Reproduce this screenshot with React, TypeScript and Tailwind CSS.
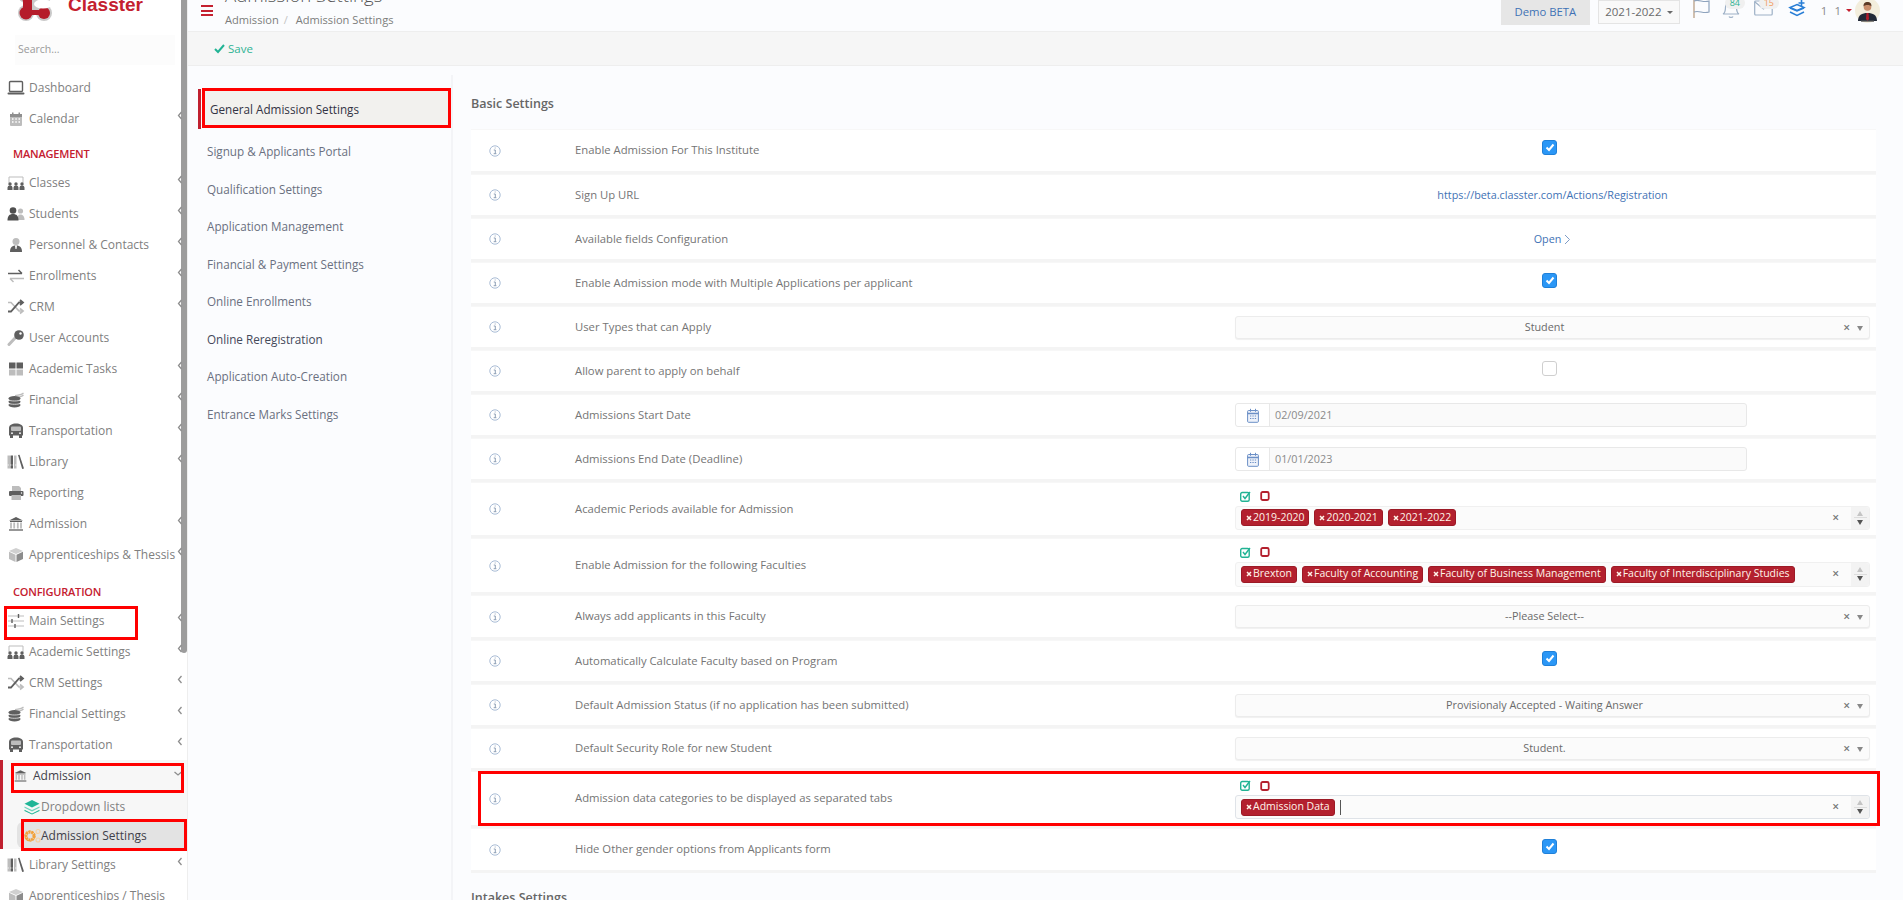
import React from "react";

const D = "#5f5f5f";
const L = "#bdbdbd";

function Icon({ name }: { name: string }) {
  const common = { width: 18, height: 16, viewBox: "0 0 18 16" };
  switch (name) {
    case "laptop":
      return (
        <svg {...common}>
          <rect x="2.5" y="1.5" width="13" height="10" rx="1" fill="none" stroke={D} strokeWidth="1.4" />
          <rect x="0.5" y="12.5" width="17" height="2" rx="1" fill={D} />
        </svg>
      );
    case "calendar":
      return (
        <svg {...common}>
          <rect x="3" y="3" width="12" height="12" rx="1" fill={L} />
          <rect x="3" y="3" width="12" height="3" fill="#8f8f8f" />
          <rect x="5" y="1.5" width="1.5" height="3" fill="#8f8f8f" />
          <rect x="11.5" y="1.5" width="1.5" height="3" fill="#8f8f8f" />
          <path d="M5 8h1.5M8.3 8h1.5M11.5 8h1.5M5 11h1.5M8.3 11h1.5M11.5 11h1.5" stroke="#fff" strokeWidth="1.4" />
        </svg>
      );
    case "classes":
      return (
        <svg {...common}>
          <path d="M2 8V2h14v6" fill="none" stroke={L} strokeWidth="1" />
          <circle cx="3" cy="9" r="1.7" fill={D} />
          <circle cx="9" cy="9" r="1.7" fill={D} />
          <circle cx="15" cy="9" r="1.7" fill={D} />
          <path d="M0.5 15v-2.500a2.500 2 0 0 1 5 0V15zM6.500 15v-2.500a2.500 2 0 0 1 5 0V15zM12.500 15v-2.500a2.500 2 0 0 1 5 0V15z" fill={D} />
        </svg>
      );
    case "students":
      return (
        <svg {...common}>
          <circle cx="13.500" cy="5" r="2.600" fill={L} />
          <path d="M10 14c0-4 1.500-5.500 3.500-5.500S17.500 10 17.500 14z" fill={L} />
          <circle cx="6" cy="4.500" r="3.300" fill="#4f4f4f" />
          <path d="M0.500 14.500c0-4.500 2-6.500 5.500-6.500s5.500 2 5.500 6.500z" fill="#4f4f4f" />
        </svg>
      );
    case "personnel":
      return (
        <svg {...common}>
          <circle cx="9" cy="4.500" r="3.500" fill={L} />
          <path d="M3 15c0-4 1.500-6.500 6-6.500s6 2.500 6 6.500z" fill={D} />
          <path d="M8 8.500h2l-.5 3.500h-1z" fill="#fff" />
        </svg>
      );
    case "arrows":
      return (
        <svg {...common}>
          <path d="M1 5.500h14M11.500 2l3.500 3.500" fill="none" stroke={D} strokeWidth="1.500" />
          <path d="M17 10.500H3M6.500 14L3 10.500" fill="none" stroke={L} strokeWidth="1.500" />
        </svg>
      );
    case "shuffle":
      return (
        <svg {...common}>
          <path d="M1 3.500h3l8 8.500h3" fill="none" stroke={L} strokeWidth="1.700" />
          <path d="M1 12.500h3l8-9h3M13 1l3 2.500-3 2.500" fill="none" stroke={D} strokeWidth="1.800" />
          <path d="M13 9.500l3 2.500-3 2.500" fill="none" stroke={L} strokeWidth="1.700" />
        </svg>
      );
    case "key":
      return (
        <svg {...common}>
          <path d="M9 7L2 14.500" stroke={L} strokeWidth="3" strokeLinecap="round" />
          <circle cx="12" cy="5" r="4.800" fill={D} />
          <circle cx="13.500" cy="3.500" r="1.200" fill="#fff" />
        </svg>
      );
    case "grid":
      return (
        <svg {...common}>
          <rect x="2" y="1.500" width="6.500" height="6" fill={D} />
          <rect x="9.500" y="1.500" width="6.500" height="6" fill={D} />
          <rect x="2" y="8.500" width="6.500" height="6" fill={L} />
          <rect x="9.500" y="8.500" width="6.500" height="6" fill={L} />
        </svg>
      );
    case "coins":
      return (
        <svg {...common}>
          <path d="M8 3.500c3-.3 7-1 8.500-2.500M8 5.500c3-.3 7-1 8.500-2.500" stroke={L} strokeWidth="1.200" fill="none" />
          <ellipse cx="7.500" cy="6.500" rx="6" ry="2.400" fill={D} />
          <ellipse cx="7.500" cy="9.800" rx="6" ry="2.400" fill={D} />
          <ellipse cx="7.500" cy="13" rx="6" ry="2.400" fill={D} />
          <path d="M1.500 8c2 1.300 10 1.300 12 0M1.500 11.300c2 1.300 10 1.300 12 0" stroke="#fff" strokeWidth="0.700" fill="none" />
        </svg>
      );
    case "bus":
      return (
        <svg {...common}>
          <path d="M2 5c0-3 3-4.500 7-4.500S16 2 16 5v7.500H2z" fill={D} />
          <rect x="4" y="3.500" width="10" height="4.500" rx="1" fill={L} />
          <rect x="3" y="12" width="3" height="3" fill={D} />
          <rect x="12" y="12" width="3" height="3" fill={D} />
          <circle cx="5" cy="10.200" r="0.900" fill="#fff" />
          <circle cx="13" cy="10.200" r="0.900" fill="#fff" />
        </svg>
      );
    case "books":
      return (
        <svg {...common}>
          <rect x="0.500" y="1.500" width="2.500" height="13" fill={L} />
          <rect x="3.500" y="1.500" width="2.500" height="13" fill={D} />
          <rect x="7" y="1.500" width="2.500" height="13" fill={L} />
          <path d="M11 1l1.500-.3L17 14.500l-1.800.5z" fill={D} />
          <path d="M0.500 11h9" stroke="#fff" strokeWidth="0.700" strokeDasharray="1.500 1" />
        </svg>
      );
    case "printer":
      return (
        <svg {...common}>
          <path d="M5 1h7l2 2v3H5z" fill={L} />
          <rect x="2" y="6" width="14.500" height="5" rx="1" fill={D} />
          <rect x="4.500" y="10" width="9.500" height="5" fill={L} />
          <circle cx="14.500" cy="8" r="0.700" fill="#fff" />
        </svg>
      );
    case "bank":
      return (
        <svg {...common}>
          <path d="M9 1L16 4.500H2z" fill={D} />
          <path d="M3 5.500h12" stroke={D} strokeWidth="1" />
          <path d="M4 6.500v6M7.200 6.500v6M10.800 6.500v6M14 6.500v6" stroke={L} strokeWidth="1.800" />
          <path d="M2 14h14" stroke={D} strokeWidth="1.300" />
        </svg>
      );
    case "cube":
      return (
        <svg {...common}>
          <path d="M9 1l7 3-7 3-7-3z" fill="#d0d0d0" />
          <path d="M2 4.800l6.500 2.900V15L2 12z" fill={L} />
          <path d="M9.500 7.700L16 4.800V12l-6.500 3z" fill="#8c8c8c" />
        </svg>
      );
    case "sliders":
      return (
        <svg {...common}>
          <path d="M1 3h16M1 8h16M1 13h16" stroke={L} strokeWidth="1" />
          <path d="M11.500 1v4M5 6v4M8 11v4" stroke={D} strokeWidth="1.400" />
        </svg>
      );
    case "layers":
      return (
        <svg {...common}>
          <path d="M9 1l7.500 3.800L9 8.500 1.500 4.800z" fill="#1fb596" />
          <path d="M1.500 7.500L9 11l7.500-3.500v1.200L9 12.500 1.500 8.700z" fill="#6ed3bd" />
          <path d="M1.500 10.800L9 14.500l7.500-3.700V12L9 15.500 1.500 12z" fill="#1fb596" />
        </svg>
      );
    case "cogs":
      return (
        <svg {...common}>
          <circle cx="6" cy="8" r="4" fill="none" stroke="#f2a23c" strokeWidth="3" strokeDasharray="2.200 0.600" />
          <circle cx="6" cy="8" r="5" fill="none" stroke="#f2a23c" strokeWidth="1.200" strokeDasharray="1.600 1.500" />
          <circle cx="14" cy="3.500" r="2" fill="none" stroke="#f7d0a0" strokeWidth="1.200" />
          <circle cx="14" cy="12" r="2" fill="none" stroke="#f7d0a0" strokeWidth="1.200" />
        </svg>
      );
    default:
      return null;
  }
}

function Chevron({ down }: { down?: boolean }) {
  return (
    <svg
      width="6"
      height="9"
      viewBox="0 0 6 9"
      className={down ? "absolute right-[6px] top-[9px] rotate-[-90deg]" : "absolute right-[4px] top-[8px]"}
    >
      <path d="M4.500 1L1.500 4.500l3 3.500" fill="none" stroke="#8e8e8e" strokeWidth="1.300" />
    </svg>
  );
}

function RedBox({ className }: { className: string }) {
  return <div className={"absolute border-[3px] border-[#ff0000] pointer-events-none z-20 " + className} />;
}

function NavRow({ icon, label, chev, children }: { icon: string; label: string; chev?: boolean; children?: React.ReactNode }) {
  return (
    <div className="relative flex h-[31px] items-center pl-[7px] text-[12px] text-[#808080]">
      <span className="flex w-[18px] justify-center">
        <Icon name={icon} />
      </span>
      <span className="ml-[4px] whitespace-nowrap">{label}</span>
      {chev && <Chevron />}
      {children}
    </div>
  );
}

function SectionTitle({ children, className }: { children: string; className: string }) {
  return <div className={"flex items-center pl-[13px] text-[11px] font-semibold tracking-[-0.2px] text-[#c4202f] " + className}>{children}</div>;
}

function Sidebar() {
  return (
    <aside className="relative h-[900px] w-[188px] shrink-0 overflow-hidden border-r border-[#eeeeee] bg-white">
      <div className="absolute left-[181px] top-0 h-[653px] w-[6px] rounded-b-[3px] bg-[#9c9c9c]" />
      <div className="relative flex h-[33px] items-start pl-[18px]">
        <svg width="34" height="34" viewBox="0 0 34 34" className="mt-[-13px] shrink-0">
          <g fill="#c9c9c9">
            <circle cx="8" cy="8" r="8" />
            <circle cx="26" cy="8" r="8" />
            <circle cx="8" cy="26" r="8" />
            <circle cx="26" cy="26" r="8" />
            <rect x="6" y="6" width="14" height="22" />
          </g>
          <g fill="#b51c2a">
            <circle cx="8" cy="8" r="6.500" />
            <circle cx="26" cy="8" r="6" />
            <circle cx="8" cy="26" r="6.500" />
            <circle cx="26" cy="26" r="6" />
            <rect x="6" y="6" width="20" height="5" />
            <rect x="6" y="23" width="20" height="5" />
            <rect x="5" y="8" width="9" height="18" />
          </g>
          <ellipse cx="25" cy="17" rx="9" ry="4.500" fill="#ffffff" />
        </svg>
        <span className="ml-[16px] mt-[-7px] font-['Liberation_Sans',sans-serif] text-[19px] font-bold leading-[24px] text-[#c4202f]">Classter</span>
      </div>
      <div className="ml-[15px] mt-[2px] flex h-[30px] w-[160px] items-center bg-[#fcfcfc] pl-[3px] text-[10.500px] text-[#9a9a9a]">Search...</div>
      <div className="h-[7px]" />
      <NavRow icon="laptop" label="Dashboard" />
      <NavRow icon="calendar" label="Calendar" chev />
      <SectionTitle className="h-[33px] pt-[8px]">MANAGEMENT</SectionTitle>
      <NavRow icon="classes" label="Classes" chev />
      <NavRow icon="students" label="Students" chev />
      <NavRow icon="personnel" label="Personnel & Contacts" chev />
      <NavRow icon="arrows" label="Enrollments" chev />
      <NavRow icon="shuffle" label="CRM" chev />
      <NavRow icon="key" label="User Accounts" />
      <NavRow icon="grid" label="Academic Tasks" chev />
      <NavRow icon="coins" label="Financial" chev />
      <NavRow icon="bus" label="Transportation" chev />
      <NavRow icon="books" label="Library" chev />
      <NavRow icon="printer" label="Reporting" />
      <NavRow icon="bank" label="Admission" chev />
      <NavRow icon="cube" label="Apprenticeships & Thessis" chev />
      <SectionTitle className="h-[35px] pt-[9px]">CONFIGURATION</SectionTitle>
      <NavRow icon="sliders" label="Main Settings" chev>
        <RedBox className="left-[4px] top-[1px] h-[34px] w-[134px]" />
      </NavRow>
      <NavRow icon="classes" label="Academic Settings" chev />
      <NavRow icon="shuffle" label="CRM Settings" chev />
      <NavRow icon="coins" label="Financial Settings" chev />
      <NavRow icon="bus" label="Transportation" chev />
      <div className="relative h-[89px] border-l-[3px] border-[#c0202f] bg-[#f7f7f7]">
        <div className="relative flex h-[31px] items-center pl-[10px] text-[12px] text-[#3f3f4a]">
          <span className="flex w-[15px] justify-center">
            <svg width="15" height="14" viewBox="0 0 18 16">
              <path d="M9 1L16 4.500H2z" fill={D} />
              <path d="M3 5.500h12" stroke={D} strokeWidth="1" />
              <path d="M4 6.500v6M7.200 6.500v6M10.800 6.500v6M14 6.500v6" stroke={L} strokeWidth="1.800" />
              <path d="M2 14h14" stroke={D} strokeWidth="1.300" />
            </svg>
          </span>
          <span className="ml-[5px]">Admission</span>
          <Chevron down />
          <RedBox className="left-[8px] top-[3px] h-[30px] w-[173px]" />
        </div>
        <div className="flex h-[31px] items-center pl-[20px] text-[12px] text-[#808080]">
          <Icon name="layers" />
          <span>Dropdown lists</span>
        </div>
        <div className="relative ml-[14px] flex h-[26px] items-center rounded-l-[6px] bg-[#e3e3e3] pl-[7px] pt-[1px] text-[12px] text-[#3f3f4a]">
          <Icon name="cogs" />
          <span className="ml-[-1px]">Admission Settings</span>
          <RedBox className="left-[4px] top-[-3px] h-[32px] w-[166px]" />
        </div>
      </div>
      <NavRow icon="books" label="Library Settings" chev />
      <NavRow icon="cube" label="Apprenticeships / Thesis" />
    </aside>
  );
}

function TopBar() {
  return (
    <div className="flex h-[32px] shrink-0 items-start border-b border-[#eeeeee] bg-[#fbfcfe]">
      <div className="ml-[13px] mt-[5px] flex h-[11px] w-[12px] flex-col justify-between">
        <span className="h-[2px] bg-[#c4202f]" />
        <span className="h-[2px] bg-[#c4202f]" />
        <span className="h-[2px] bg-[#c4202f]" />
      </div>
      <div className="ml-[12px] flex flex-col">
        <span className="mt-[-20px] text-[18.600px] font-light leading-[30px] text-[#555555]">Admission Settings</span>
        <span className="mt-[2px] text-[11.100px] leading-[16px] text-[#7c7c7c]">
          Admission<span className="mx-[5px] text-[#c4c4c4]">/</span> Admission Settings
        </span>
      </div>
      <div className="ml-auto mr-[23px] flex items-start">
        <div className="flex h-[25px] w-[89px] items-center justify-center bg-[#e6e6e6] text-[11.300px] text-[#3f72b5]">Demo BETA</div>
        <div className="ml-[8px] flex h-[24px] w-[82px] items-center justify-center gap-[5px] border border-[#e4e4e4] bg-[#f9f9f9] text-[11.500px] text-[#6a6a6a]">
          2021-2022
          <span className="h-0 w-0 border-x-[3.500px] border-t-[3.500px] border-x-transparent border-t-[#6a6a6a]" />
        </div>
        <svg width="19" height="19" viewBox="0 0 19 19" className="ml-[12px]">
          <path d="M2 0v18" stroke="#b99f85" strokeWidth="1.300" />
          <path d="M2 1c5-2 9 2 15 0v11c-6 2-10-2-15 0" fill="none" stroke="#8ea3bd" strokeWidth="1.200" />
        </svg>
        <div className="relative ml-[11px] w-[18px]">
          <svg width="18" height="19" viewBox="0 0 18 19">
            <path d="M1 14c2-1 2.500-3 2.500-7 0-3 2.500-5 5.500-5s5.500 2 5.500 5c0 4 .5 6 2.500 7z" fill="none" stroke="#9db0c6" strokeWidth="1.200" />
            <path d="M7 16.500c.5 1.200 3.500 1.200 4 0" fill="none" stroke="#9db0c6" strokeWidth="1.200" />
          </svg>
          <span className="absolute left-[3px] top-[-3px] flex h-[12px] w-[20px] items-center justify-center rounded-full bg-[#f0f0f0] text-[9px] text-[#2fb394]">84</span>
        </div>
        <div className="relative ml-[14px] w-[19px]">
          <svg width="19" height="17" viewBox="0 0 19 17">
            <rect x="0.700" y="1" width="17.500" height="14" rx="1" fill="none" stroke="#9db0c6" strokeWidth="1.200" />
            <path d="M1 2l8.500 7L18 2" fill="none" stroke="#9db0c6" strokeWidth="1.200" />
          </svg>
          <span className="absolute left-[5px] top-[-3px] flex h-[12px] w-[20px] items-center justify-center rounded-full bg-[#f0f0f0] text-[9px] text-[#f29a5c]">15</span>
        </div>
        <svg width="18" height="17" viewBox="0 0 18 17" className="ml-[15px]">
          <path d="M9 4.500l7 3-7 3-7-3z" fill="none" stroke="#2a7fd6" strokeWidth="1.500" />
          <path d="M2 8l7 3 7-3M2 12l7 3.500 7-3.500" fill="none" stroke="#2a7fd6" strokeWidth="1.500" />
          <path d="M13.500 0v6M10.500 3h6" stroke="#2a7fd6" strokeWidth="1.600" />
        </svg>
        <span className="ml-[15px] mt-[2px] text-[11.500px] tracking-[2px] text-[#8a8a8a]">1 1</span>
        <span className="ml-[3px] mt-[9px] h-0 w-0 border-x-[3.500px] border-t-[3.500px] border-x-transparent border-t-[#c4202f]" />
        <svg width="25" height="24" viewBox="0 0 25 24" className="ml-[3px]">
          <circle cx="12.500" cy="10.500" r="12.500" fill="#f3eedd" />
          <path d="M3 21c0-6 4-8 9.500-8S22 15 22 21z" fill="#232a38" />
          <path d="M11.500 13h2l.5 6-1.500 2-1.500-2z" fill="#b01c2a" />
          <circle cx="12.500" cy="7" r="3.800" fill="#c98e6c" />
          <path d="M8.500 6.500C8.500 3 10 2 12.500 2s4 1 4 4.500c-1-2-7-2-8 0z" fill="#5b3a26" />
          <rect x="6" y="20.500" width="13" height="1.200" fill="#555" />
        </svg>
      </div>
    </div>
  );
}

const tabs = [
  ["Signup & Applicants Portal", "h-[37px]"],
  ["Qualification Settings", "h-[38px]"],
  ["Application Management", "h-[37px]"],
  ["Financial & Payment Settings", "h-[38px]"],
  ["Online Enrollments", "h-[37px]"],
  ["Online Reregistration", "h-[38px]"],
  ["Application Auto-Creation", "h-[37px]"],
  ["Entrance Marks Settings", "h-[38px]"],
];

function Tabs() {
  return (
    <div className="mt-[9px] w-[265px] shrink-0 border-r-2 border-[#f3f4f7] pl-[10px]">
      <div className="relative mt-[14px] flex h-[40px] items-center border-l-[3px] border-[#c0202f] pl-[9px] pt-[2px] text-[11.700px] text-[#333344]">
        <span className="absolute left-[1px] top-0 h-[39px] w-[248px] bg-[#f2f1ee]" />
        <span className="relative">General Admission Settings</span>
        <RedBox className="left-[1px] top-[-1px] h-[40px] w-[249px]" />
      </div>
      <div className="h-[3px]" />
      {tabs.map(([t, h], i) => (
        <div key={t} className={"flex items-center pl-[9px] pt-[3px] text-[11.700px] " + h + (i === 5 ? " text-[#44495a]" : " text-[#6a7080]")}>
          {t}
        </div>
      ))}
    </div>
  );
}

function Info() {
  return (
    <svg width="12" height="12" viewBox="0 0 12 12">
      <circle cx="6" cy="6" r="5.200" fill="none" stroke="#9fb4d0" strokeWidth="0.900" />
      <path d="M4.800 5h1.500v3.500M4.700 8.700h2.700M5.700 3h.9" fill="none" stroke="#8194ae" strokeWidth="0.900" />
    </svg>
  );
}

function Check({ on }: { on?: boolean }) {
  return (
    <div className="mb-[6px] flex w-full justify-center pr-[6px]">
      {on ? (
        <span className="flex h-[15px] w-[15px] items-center justify-center rounded-[3px] border border-[#2080d8] bg-[#2b97f6]">
          <svg width="10" height="9" viewBox="0 0 10 9">
            <path d="M1.500 4.500l2.500 2.500 4.500-5.500" fill="none" stroke="#fff" strokeWidth="2" />
          </svg>
        </span>
      ) : (
        <span className="h-[15px] w-[15px] rounded-[3px] border border-[#cfcfcf] bg-white" />
      )}
    </div>
  );
}

function SelectBox({ text }: { text: string }) {
  return (
    <div className="relative flex h-[23px] items-center justify-center rounded-[3px] border border-[#ececec] bg-[#fbfbfb] pr-[16px] text-[10.800px] text-[#6a6a6a] shadow-[0_1px_1px_#f0f0f0]">
      {text}
      <span className="absolute right-[19px] top-[3px] text-[12px] font-semibold leading-[16px] text-[#777777]">×</span>
      <span className="absolute right-[6px] top-[9px] h-0 w-0 border-x-[3.500px] border-t-[5px] border-x-transparent border-t-[#888888]" />
    </div>
  );
}

function DateBox({ value }: { value: string }) {
  return (
    <div className="flex h-[24px] w-[512px] rounded-[3px] border border-[#e8e8e8] bg-[#fafafa] text-[10.800px] text-[#8a8a8a]">
      <span className="flex w-[34px] items-center justify-center rounded-l-[3px] border-r border-[#e8e8e8] bg-white">
        <svg width="12" height="15" viewBox="0 0 12 15">
          <rect x="0.600" y="2.500" width="10.800" height="11.800" rx="1" fill="#eef2fa" stroke="#6b8fc6" strokeWidth="1" />
          <path d="M0.600 5.500h10.800" stroke="#6b8fc6" strokeWidth="1.500" />
          <path d="M3.500 0.800v3M8.500 0.800v3" stroke="#6b8fc6" strokeWidth="1" />
          <path d="M3 8h1.300M5.400 8h1.300M7.800 8h1.300M3 10.500h1.300M5.400 10.500h1.300M7.800 10.500h1.300" stroke="#6b8fc6" strokeWidth="1.100" />
        </svg>
      </span>
      <span className="flex items-center pl-[5px]">{value}</span>
    </div>
  );
}

function Tag({ text }: { text: string }) {
  return (
    <span className="flex h-[17px] items-center whitespace-nowrap rounded-[3px] border border-[#9c1a26] bg-[#b3202e] px-[4px] text-[10.500px] text-[#fff5ea]">
      <svg width="6" height="6" viewBox="0 0 6 6" className="mr-[1px] shrink-0">
        <path d="M1 1l4 4M5 1L1 5" stroke="#fff5ea" strokeWidth="1.500" />
      </svg>
      {text}
    </span>
  );
}

function Multi({ tags, cursor, h = "h-[24px]", boxClass = "border-[#f0f0f0]" }: { tags: string[]; cursor?: boolean; h?: string; boxClass?: string }) {
  return (
    <div className="flex flex-col">
      <div className="flex h-[15px] items-center gap-[9px] pl-[5px]">
        <svg width="11" height="11" viewBox="0 0 11 11">
          <rect x="0.700" y="1.500" width="8.500" height="8.800" rx="1.500" fill="none" stroke="#21b394" strokeWidth="1.400" />
          <path d="M3 5l2 2.500L10 1" fill="none" stroke="#21b394" strokeWidth="1.400" />
        </svg>
        <svg width="10" height="10" viewBox="0 0 10 10">
          <rect x="1.200" y="1" width="7.500" height="8" rx="1.500" fill="none" stroke="#b3202e" strokeWidth="1.800" />
        </svg>
      </div>
      <div className={"relative mt-[2px] flex items-center rounded-[3px] border bg-[#fbfbfb] pl-[5px] " + h + " " + boxClass}>
        <div className="flex items-center gap-[5px]">
          {tags.map((t) => (
            <Tag key={t} text={t} />
          ))}
        </div>
        {cursor && <span className="ml-[5px] h-[15px] w-px bg-[#555555]" />}
        <span className="absolute right-[30px] top-[3px] text-[12px] font-semibold leading-[16px] text-[#777777]">×</span>
        <div className="absolute right-0 top-0 flex h-full w-[18px] flex-col items-center justify-center gap-[1.500px] rounded-r-[3px] bg-[#f3f3f3]">
          <span className="h-0 w-0 border-x-[3.500px] border-b-[5px] border-x-transparent border-b-[#c4c4c4]" />
          <span className="h-px w-[13px] bg-[#dddddd]" />
          <span className="h-0 w-0 border-x-[3.500px] border-t-[5px] border-x-transparent border-t-[#555555]" />
        </div>
      </div>
    </div>
  );
}

type Row = { label: string; h: string; v: React.ReactNode; boxed?: boolean };

const rows: Row[] = [
  { label: "Enable Admission For This Institute", h: "h-[45px]", v: <Check on /> },
  {
    label: "Sign Up URL",
    h: "h-[44px]",
    v: <div className="text-center text-[10.800px] text-[#3f72b5]">https://beta.classter.com/Actions/Registration</div>,
  },
  {
    label: "Available fields Configuration",
    h: "h-[44px]",
    v: (
      <div className="flex items-center justify-center gap-[3px] text-[10.800px] text-[#3f72b5]">
        Open
        <svg width="7" height="11" viewBox="0 0 7 11">
          <path d="M1 1l4.500 4.500L1 10" fill="none" stroke="#7f9cc6" strokeWidth="1" />
        </svg>
      </div>
    ),
  },
  { label: "Enable Admission mode with Multiple Applications per applicant", h: "h-[44px]", v: <Check on /> },
  { label: "User Types that can Apply", h: "h-[44px]", v: <SelectBox text="Student" /> },
  { label: "Allow parent to apply on behalf", h: "h-[44px]", v: <Check /> },
  { label: "Admissions Start Date", h: "h-[44px]", v: <DateBox value="02/09/2021" /> },
  { label: "Admissions End Date (Deadline)", h: "h-[44px]", v: <DateBox value="01/01/2023" /> },
  { label: "Academic Periods available for Admission", h: "h-[56px]", v: <Multi tags={["2019-2020", "2020-2021", "2021-2022"]} /> },
  {
    label: "Enable Admission for the following Faculties",
    h: "h-[57px]",
    v: <Multi h="h-[25px]" tags={["Brexton", "Faculty of Accounting", "Faculty of Business Management", "Faculty of Interdisciplinary Studies"]} />,
  },
  { label: "Always add applicants in this Faculty", h: "h-[45px]", v: <SelectBox text="--Please Select--" /> },
  { label: "Automatically Calculate Faculty based on Program", h: "h-[44px]", v: <Check on /> },
  { label: "Default Admission Status (if no application has been submitted)", h: "h-[44px]", v: <SelectBox text="Provisionaly Accepted - Waiting Answer" /> },
  { label: "Default Security Role for new Student", h: "h-[43px]", v: <SelectBox text="Student." /> },
  {
    label: "Admission data categories to be displayed as separated tabs",
    h: "h-[57px]",
    boxed: true,
    v: <Multi cursor boxClass="border-[#dfe3e8]" tags={["Admission Data"]} />,
  },
  { label: "Hide Other gender options from Applicants form", h: "h-[45px]", v: <Check on /> },
];

function SettingRow({ r }: { r: Row }) {
  return (
    <div className={"relative flex items-center border-b-[3px] border-t border-b-[#f4f4f4] border-t-[#f7f7f7] bg-white " + r.h}>
      <span className="flex w-[47px] justify-center">
        <Info />
      </span>
      <span className="ml-[57px] w-[660px] whitespace-nowrap text-[11.300px] text-[#757575]">{r.label}</span>
      <div className="w-[635px]">{r.v}</div>
      {r.boxed && <RedBox className="left-[7px] top-[-1px] h-[55px] w-[1402px]" />}
    </div>
  );
}

export default function App() {
  return (
    <div className="flex h-[900px] w-full overflow-hidden bg-[#fbfcfe] font-['Open_Sans',sans-serif]">
      <Sidebar />
      <main className="flex h-[900px] min-w-0 flex-1 flex-col overflow-hidden">
        <TopBar />
        <div className="flex h-[34px] shrink-0 items-center border-b border-[#eeeeee] bg-[#f6f6f6] pl-[26px] text-[11.500px] text-[#2fb394]">
          <svg width="11" height="10" viewBox="0 0 11 10" className="mr-[3px]">
            <path d="M1 5l3 3 6-7" fill="none" stroke="#21b394" strokeWidth="2" />
          </svg>
          Save
        </div>
        <div className="flex shrink-0">
          <Tabs />
          <div className="ml-[18px] w-[1405px]">
            <div className="flex h-[63px] items-center pt-[13px] text-[12.500px] font-semibold text-[#666666]">Basic Settings</div>
            {rows.map((r) => (
              <SettingRow key={r.label} r={r} />
            ))}
            <div className="mt-[16px] text-[12.500px] font-semibold text-[#666666]">Intakes Settings</div>
          </div>
        </div>
      </main>
    </div>
  );
}
